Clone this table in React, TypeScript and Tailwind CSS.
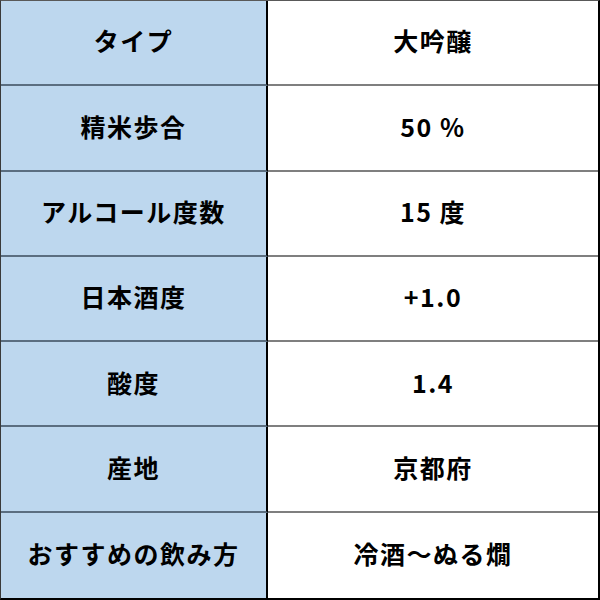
const rows = [
    { label: "タイプ", value: "大吟醸" },
    { label: "精米歩合", value: "50 %" },
    { label: "アルコール度数", value: "15 度" },
    { label: "日本酒度", value: "+1.0" },
    { label: "酸度", value: "1.4" },
    { label: "産地", value: "京都府" },
    { label: "おすすめの飲み方", value: "冷酒～ぬる燗" },
];

const App = () => {
    return (
        <div
            className="w-[600px] h-[600px] bg-white flex flex-col border-t border-l border-t-[#595959] border-l-[#3a3a3a] border-r-2 border-b-2 border-black text-black"
            style={{ fontFamily: '"Noto Sans CJK JP", "Noto Sans", sans-serif' }}
        >
            {rows.map((row, i) => (
                <div key={row.label} className="flex flex-1">
                    <div
                        className={`w-[267px] flex items-center justify-center pb-[3px] bg-[#bdd7ee] border-r-2 border-black text-[25px] font-bold tracking-[1.5px] ${
                            i < rows.length - 1 ? "border-b-2 border-b-[#5b6e80]" : ""
                        }`}
                    >
                        {row.label}
                    </div>
                    <div
                        className={`flex-1 flex items-center justify-center pb-[3px] text-[25px] font-bold tracking-[1.5px] ${
                            i < rows.length - 1 ? "border-b-2 border-b-[#7f7f7f]" : ""
                        }`}
                    >
                        {row.value}
                    </div>
                </div>
            ))}
        </div>
    );
};

export default App;
